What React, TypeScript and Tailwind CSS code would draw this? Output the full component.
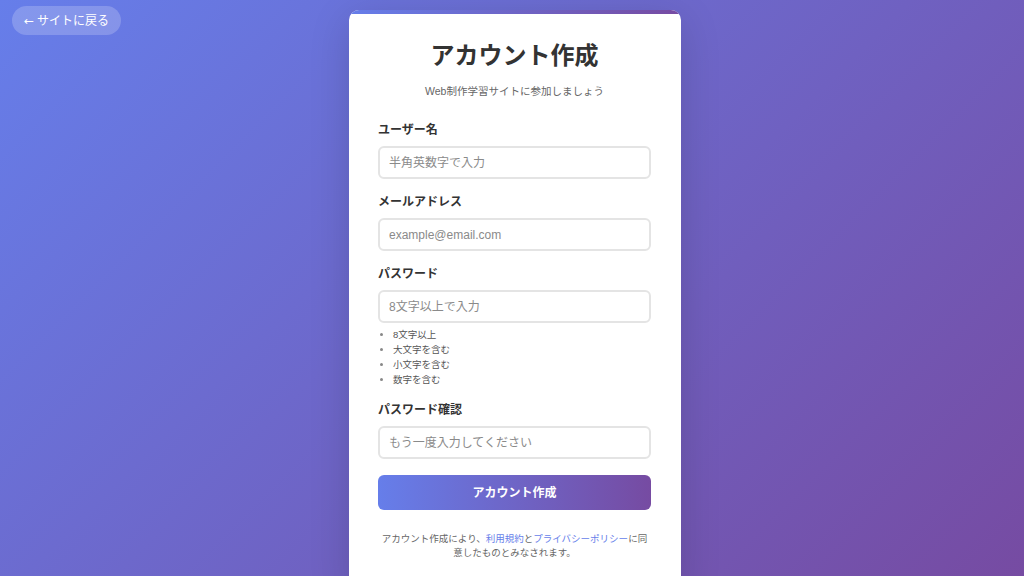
import React from 'react';

const font = { fontFamily: '"Liberation Sans", "Noto Sans CJK JP", sans-serif' };

interface FieldProps {
  label: string;
  placeholder: string;
  type?: string;
  children?: React.ReactNode;
}

function Field({ label, placeholder, type = 'text', children }: FieldProps) {
  return (
    <div className="mb-[14px]">
      <label className="block text-[12px] leading-[18px] font-bold text-[#333] mb-[7px]">{label}</label>
      <input
        type={type}
        placeholder={placeholder}
        className="block w-full h-[33px] px-[9px] text-[12px] border-2 border-[#e4e4e4] rounded-[6px] bg-white outline-none placeholder:text-[#8a8a8a]"
      />
      {children}
    </div>
  );
}

export default function App() {
  return (
    <div
      className="relative h-screen overflow-hidden bg-[linear-gradient(135deg,#667eea_0%,#764ba2_100%)]"
      style={font}
    >
      {/* 戻るボタン */}
      <a
        href="#"
        className="absolute top-[6px] left-[12px] h-[29px] px-[12px] flex items-center gap-[3px] rounded-full bg-white/20 text-white text-[12px]"
      >
        <span className="font-['DejaVu_Sans',sans-serif] text-[12px]">←</span>
        <span>サイトに戻る</span>
      </a>

      <div className="flex justify-center pl-[6px] pt-[10px]">
        <div className="w-[332px] bg-white rounded-[10px] overflow-hidden shadow-[0_10px_40px_rgba(0,0,0,0.15)]">
          <div className="h-[4px] bg-[linear-gradient(90deg,#667eea,#764ba2)]" />
          <div className="pl-[29px] pr-[30px] pt-[27px] pb-[30px]">
            <h1 className="text-center text-[24px] leading-[29px] font-bold text-[#333] mb-[13px]">アカウント作成</h1>
            <p className="text-center text-[10.5px] leading-[16px] text-[#666] mb-[22px]">
              Web制作学習サイトに参加しましょう
            </p>

            <Field label="ユーザー名" placeholder="半角英数字で入力" />
            <Field label="メールアドレス" placeholder="example@email.com" type="email" />
            <Field label="パスワード" placeholder="8文字以上で入力" type="password">
              <ul className="mt-[4px] pl-[15px] list-disc text-[9.5px] leading-[15px] text-[#555] marker:text-[#888]">
                <li>8文字以上</li>
                <li>大文字を含む</li>
                <li>小文字を含む</li>
                <li>数字を含む</li>
              </ul>
            </Field>
            <Field label="パスワード確認" placeholder="もう一度入力してください" type="password" />

            <button className="mt-[2px] w-full h-[35px] rounded-[6px] text-white text-[12px] font-bold bg-[linear-gradient(90deg,#667eea,#764ba2)]">
              アカウント作成
            </button>

            <p className="mt-[22px] text-center text-[9.5px] leading-[14px] text-[#666]">
              アカウント作成により、<a href="#" className="text-[#667eea]">利用規約</a>と<a href="#" className="text-[#667eea]">プライバシーポリシー</a>に同意したものとみなされます。
            </p>
          </div>
        </div>
      </div>
    </div>
  );
}
